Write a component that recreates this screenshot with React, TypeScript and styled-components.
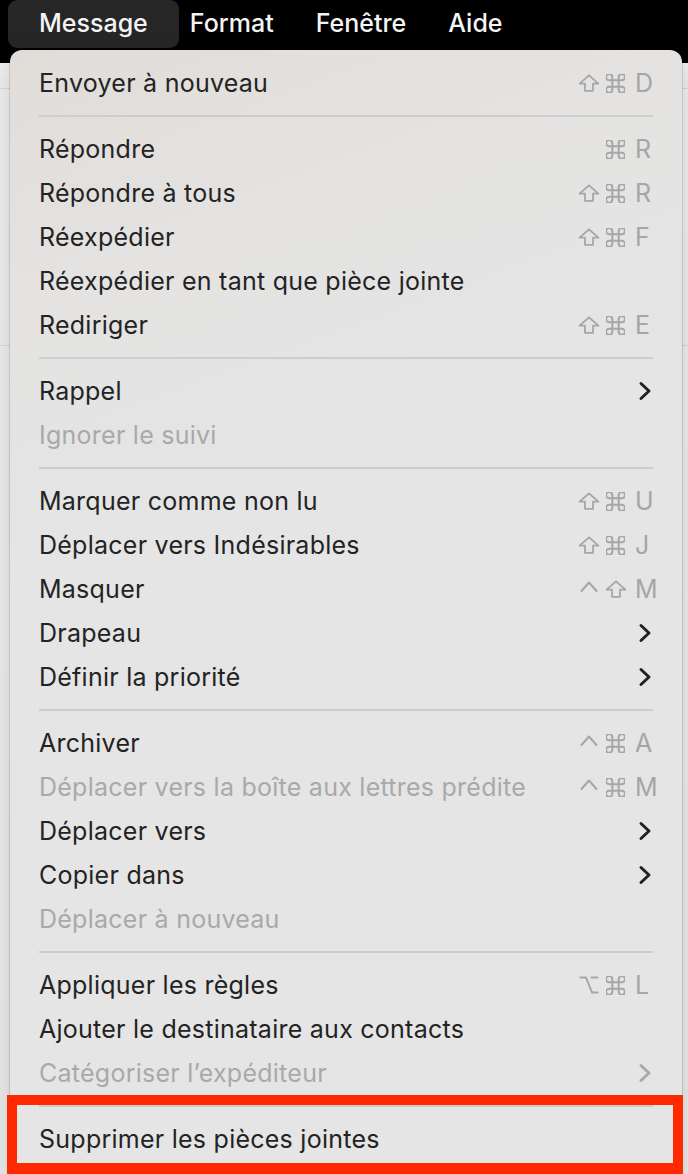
import React, { ReactElement } from 'react';
import styled, { createGlobalStyle } from 'styled-components';

const GlobalStyle = createGlobalStyle`
  html, body {
    margin: 0;
    padding: 0;
    background: #efefef;
    overflow: hidden;
  }

  body {
    font-family: Inter, 'Noto Sans', 'DejaVu Sans', sans-serif;
    -webkit-font-smoothing: antialiased;
  }
`;

const Screen = styled.div`
  position: relative;
  width: 688px;
  height: 1174px;
  overflow: hidden;
  background: #f1f1f1;
`;

const MenuBar = styled.div`
  display: flex;
  align-items: flex-start;
  height: 63px;
  padding-left: 18px;
  background: #000;
`;

const MenuTitle = styled.div<{ $active?: boolean }>`
  height: 48px;
  line-height: 46px;
  padding: ${({ $active }) => ($active ? '0 31px' : '0 21px')};
  margin: ${({ $active }) => ($active ? '0 -10px' : '0')};
  border-radius: 9px;
  background: ${({ $active }) => ($active ? '#262626' : 'transparent')};
  color: #f4f4f4;
  font-size: 25px;
  font-weight: 500;
`;

const Backdrop = styled.div`
  height: 1111px;
  background: linear-gradient(#f3f3f3, #ededed);
`;

const BackdropRule = styled.div<{ $top: number }>`
  margin-top: ${({ $top }) => $top}px;
  height: 1px;
  background: #dcdcdc;
`;

const Dropdown = styled.div`
  position: absolute;
  top: 50px;
  left: 10px;
  width: 672px;
  height: 1160px;
  padding-top: 11px;
  box-sizing: border-box;
  border-radius: 12px;
  background: linear-gradient(160deg, #e1dcd8 0%, #e4e3e2 18%, #e5e5e5 40%, #e5e5e5 100%);
  box-shadow: 0 0 0 1px rgba(0, 0, 0, 0.12), 0 10px 30px rgba(0, 0, 0, 0.18);
`;

const Item = styled.div<{ $disabled?: boolean }>`
  display: flex;
  align-items: center;
  justify-content: space-between;
  height: 44px;
  padding: 0 29px;
  font-size: 25px;
  letter-spacing: 0.25px;
  color: ${({ $disabled }) => ($disabled ? '#a9a9a9' : '#232323')};
`;

const Separator = styled.div`
  height: 2px;
  margin: 10px 29px;
  background: #cdcdcd;
`;

const Shortcut = styled.div`
  display: flex;
  align-items: center;
  color: #a6a6a6;
  font-size: 25px;
`;

const Mod = styled.span`
  display: flex;
  align-items: center;
  justify-content: center;
  width: 27px;
  height: 20px;
`;

const Key = styled.span`
  width: 18px;
  margin-left: 6px;
  white-space: nowrap;
`;

const ChevronIcon = styled.svg<{ $disabled?: boolean }>`
  width: 14px;
  height: 20px;
  margin-right: 1px;
  color: ${({ $disabled }) => ($disabled ? '#a9a9a9' : '#222')};
`;

const Annotation = styled.div`
  position: absolute;
  left: 7px;
  top: 1095px;
  width: 676px;
  height: 79px;
  box-sizing: border-box;
  border: 10px solid #ff2a00;
  border-bottom-width: 11px;
`;

type Modifier = 'shift' | 'cmd' | 'ctrl' | 'opt' | 'none';

type Entry =
  | { kind: 'sep' }
  | { kind: 'item'; label: string; mods?: Modifier[]; keyChar?: string; submenu?: boolean; disabled?: boolean };

const entries: Entry[] = [
  { kind: 'item', label: 'Envoyer à nouveau', mods: ['shift', 'cmd'], keyChar: 'D' },
  { kind: 'sep' },
  { kind: 'item', label: 'Répondre', mods: ['none', 'cmd'], keyChar: 'R' },
  { kind: 'item', label: 'Répondre à tous', mods: ['shift', 'cmd'], keyChar: 'R' },
  { kind: 'item', label: 'Réexpédier', mods: ['shift', 'cmd'], keyChar: 'F' },
  { kind: 'item', label: 'Réexpédier en tant que pièce jointe' },
  { kind: 'item', label: 'Rediriger', mods: ['shift', 'cmd'], keyChar: 'E' },
  { kind: 'sep' },
  { kind: 'item', label: 'Rappel', submenu: true },
  { kind: 'item', label: 'Ignorer le suivi', disabled: true },
  { kind: 'sep' },
  { kind: 'item', label: 'Marquer comme non lu', mods: ['shift', 'cmd'], keyChar: 'U' },
  { kind: 'item', label: 'Déplacer vers Indésirables', mods: ['shift', 'cmd'], keyChar: 'J' },
  { kind: 'item', label: 'Masquer', mods: ['ctrl', 'shift'], keyChar: 'M' },
  { kind: 'item', label: 'Drapeau', submenu: true },
  { kind: 'item', label: 'Définir la priorité', submenu: true },
  { kind: 'sep' },
  { kind: 'item', label: 'Archiver', mods: ['ctrl', 'cmd'], keyChar: 'A' },
  { kind: 'item', label: 'Déplacer vers la boîte aux lettres prédite', mods: ['ctrl', 'cmd'], keyChar: 'M', disabled: true },
  { kind: 'item', label: 'Déplacer vers', submenu: true },
  { kind: 'item', label: 'Copier dans', submenu: true },
  { kind: 'item', label: 'Déplacer à nouveau', disabled: true },
  { kind: 'sep' },
  { kind: 'item', label: 'Appliquer les règles', mods: ['opt', 'cmd'], keyChar: 'L' },
  { kind: 'item', label: 'Ajouter le destinataire aux contacts' },
  { kind: 'item', label: 'Catégoriser l’expéditeur', submenu: true, disabled: true },
  { kind: 'sep' },
  { kind: 'item', label: 'Supprimer les pièces jointes' },
];

function ModGlyph({ mod }: { mod: Modifier }): ReactElement | null {
  const stroke = { stroke: 'currentColor', fill: 'none', strokeLinecap: 'round' as const, strokeLinejoin: 'round' as const };
  switch (mod) {
    case 'shift':
      return (
        <svg width="22" height="18" viewBox="0 0 22 18">
          <path d="M11 1.3 L20.4 9.6 H15 V16.8 H7 V9.6 H1.6 Z" strokeWidth="1.8" {...stroke} />
        </svg>
      );
    case 'cmd':
      return (
        <svg width="19" height="19" viewBox="3 3 18 18">
          <path
            d="M15 6v12a3 3 0 1 0 3-3H6a3 3 0 1 0 3 3V6a3 3 0 1 0-3 3h12a3 3 0 1 0-3-3"
            strokeWidth="1.9"
            {...stroke}
          />
        </svg>
      );
    case 'ctrl':
      return (
        <svg width="20" height="18" viewBox="0 0 20 18">
          <path d="M2.5 11 L10 2.5 L17.5 11" strokeWidth="2" {...stroke} />
        </svg>
      );
    case 'opt':
      return (
        <svg width="20" height="18" viewBox="0 0 20 18">
          <path d="M1.5 1.5 H7 L13 16.5 H18.5 M12.5 1.5 H18.5" strokeWidth="2" {...stroke} />
        </svg>
      );
    default:
      return null;
  }
}

function Chevron({ disabled }: { disabled?: boolean }): ReactElement {
  return (
    <ChevronIcon $disabled={disabled} viewBox="0 0 14 20" fill="none">
      <path d="M3 2.5 L11 10 L3 17.5" stroke="currentColor" strokeWidth="3" strokeLinecap="round" strokeLinejoin="round" />
    </ChevronIcon>
  );
}

function App(): ReactElement {
  return (
    <Screen>
      <GlobalStyle />
      <MenuBar>
        <MenuTitle $active>Message</MenuTitle>
        <MenuTitle>Format</MenuTitle>
        <MenuTitle>Fenêtre</MenuTitle>
        <MenuTitle>Aide</MenuTitle>
      </MenuBar>
      <Backdrop>
        <BackdropRule $top={25} />
        <BackdropRule $top={256} />
      </Backdrop>
      <Dropdown>
        {entries.map((entry, i) =>
          entry.kind === 'sep' ? (
            <Separator key={i} />
          ) : (
            <Item key={i} $disabled={entry.disabled}>
              <span>{entry.label}</span>
              {entry.keyChar && (
                <Shortcut>
                  {entry.mods?.map((m, j) => (
                    <Mod key={j}>
                      <ModGlyph mod={m} />
                    </Mod>
                  ))}
                  <Key>{entry.keyChar}</Key>
                </Shortcut>
              )}
              {entry.submenu && <Chevron disabled={entry.disabled} />}
            </Item>
          ),
        )}
      </Dropdown>
      <Annotation />
    </Screen>
  );
}

export default App;
